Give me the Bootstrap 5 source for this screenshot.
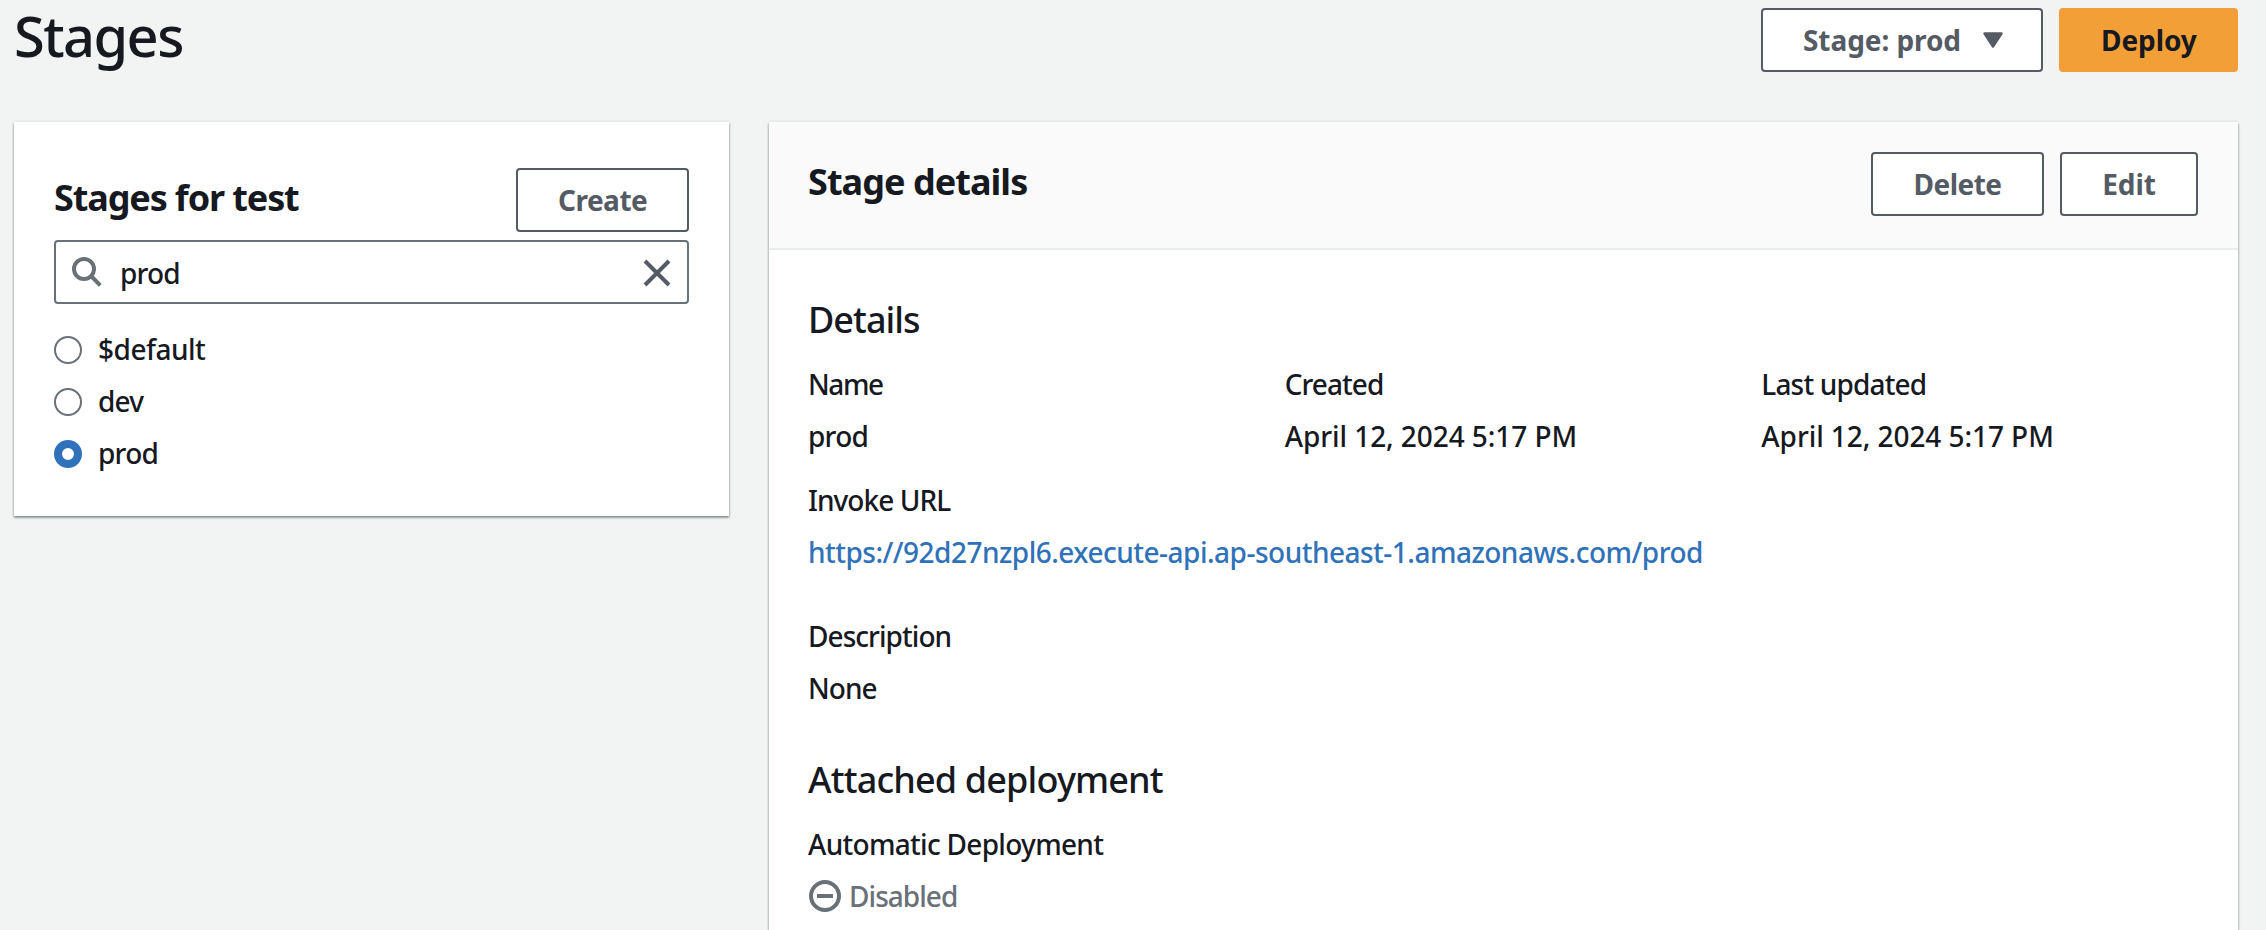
<!DOCTYPE html>
<html lang="en">
<head>
<meta charset="utf-8">
<meta name="viewport" content="width=device-width, initial-scale=1">
<title>Stages</title>
<link href="https://cdn.jsdelivr.net/npm/bootstrap@5.3.0/dist/css/bootstrap.min.css" rel="stylesheet">
<style>
  body {
    background: #f2f3f3;
    color: #16191f;
    font: 500 28px/44px "Noto Sans", "Open Sans", sans-serif;
    letter-spacing: -.5px;
    overflow: hidden;
  }
  .page { height: 930px; padding: 0 28px 0 14px; }
  .page-head { height: 122px; }
  .page-title { font-size: 56px; line-height: 70px; font-weight: 500; letter-spacing: -1.6px; }
  .head-actions { padding-top: 8px; }
  .gap-btn { gap: 16px; }

  .btn-console {
    height: 64px;
    padding: 0 40px;
    border: 2px solid #545b64;
    border-radius: 4px;
    background: #fff;
    color: #545b64;
    font-size: 28px;
    font-weight: 700;
    line-height: 58px;
    white-space: nowrap;
  }
  .btn-deploy { background: #f29f38; border-color: #f29f38; color: #16191f; }
  .caret { width: 20px; height: 16px; }
  .w-stage { width: 282px; padding-right: 38px; }
  .w-deploy { width: 179px; }
  .w-create, .w-delete { width: 173px; }
  .w-edit { width: 138px; }

  .panel {
    border: 0;
    border-radius: 0;
    background: #fff;
    color: inherit;
    box-shadow: 0 2px 2px 0 rgba(0, 28, 36, .3), 1px 1px 2px 0 rgba(0, 28, 36, .15), -1px 1px 2px 0 rgba(0, 28, 36, .15), 0 -2px 0 0 #eaeded;
  }
  .panels { gap: 40px; }
  .panel-list { width: 715px; height: 394px; padding: 46px 40px 0; }
  .panel-details { flex: 1; height: 840px; }
  .panel-head {
    height: 128px;
    padding: 30px 40px 0 39px;
    border-bottom: 2px solid #eaeded;
    border-radius: 0 !important;
    background: #fafafa;
  }
  .panel-main { padding: 48px 40px 0 39px; }
  .title-bold, .title-light { font-size: 36px; line-height: 44px; margin: 0; }
  .title-bold { font-weight: 700; }
  .title-light { font-weight: 500; margin-bottom: 20px; }

  .search {
    height: 64px;
    margin-top: 8px;
    padding: 2px 14px 0 16px;
    border: 2px solid #687078;
    border-radius: 4px;
  }
  .search input {
    min-width: 0;
    margin-left: 16px;
    padding: 0;
    border: 0;
    outline: 0;
    background: none;
    color: inherit;
    font: inherit;
    letter-spacing: -.8px;
  }
  .stage-list { padding-top: 23px; }
  .stage-option { height: 44px; margin-bottom: 8px; gap: 16px; }
  .stage-option .form-check-input {
    width: 28px;
    height: 28px;
    margin: 2px 0 0;
    border: 2px solid #687078;
    background-image: none;
  }
  .stage-option .form-check-input:checked { border: 8.5px solid #3072b9; background-color: #fff; }

  .fields { display: grid; grid-template-columns: repeat(3, 1fr); column-gap: 40px; }
  .field dt, .field dd { margin: 0; font-weight: 500; }
  .field dt { margin-bottom: 8px; }
  .mt-url { margin-top: 20px; }
  .mt-desc { margin-top: 40px; }
  .mt-attached { margin-top: 48px; }
  .link-url { color: #3072b9; text-decoration: none; }
  .state-off { color: #687078; gap: 8px; }
  .state-off svg { margin-left: 1px; }

  .ls-n13 { letter-spacing: -1.4px; }
  .ls-n11 { letter-spacing: -1.12px; }
  .ls-n9 { letter-spacing: -.95px; }
  .ls-n8 { letter-spacing: -.84px; }
  .ls-n7 { letter-spacing: -.7px; }
  .ls-n6 { letter-spacing: -.75px; }
  .ls-n5 { letter-spacing: -.51px; }
  .ls-0 { letter-spacing: -.07px; }
</style>
</head>
<body>
<div class="page">
  <header class="page-head d-flex justify-content-between align-items-start">
    <h1 class="page-title m-0">Stages</h1>
    <div class="head-actions d-flex gap-btn">
      <button class="btn btn-console w-stage d-flex align-items-center justify-content-between ls-0" type="button"><span>Stage: prod</span>
        <svg class="caret" viewBox="0 0 20 16"><path d="M1.5 1.5h17L10 14.6z" fill="#545b64" stroke="#545b64" stroke-width="2.4" stroke-linejoin="round"/></svg>
      </button>
      <button class="btn btn-console btn-deploy w-deploy ls-0" type="button">Deploy</button>
    </div>
  </header>

  <main class="panels d-flex align-items-start">
    <section class="card panel panel-list">
      <div class="d-flex justify-content-between">
        <h2 class="title-bold ls-n11 pt-2">Stages for test</h2>
        <button class="btn btn-console w-create ls-n5" type="button">Create</button>
      </div>
      <div class="search d-flex align-items-center">
        <svg width="32" height="32" viewBox="0 0 32 32" fill="none" stroke="#687078" stroke-width="4"><circle cx="12" cy="12" r="10"/><path d="M19 19l9.3 9.3"/></svg>
        <input class="flex-grow-1" type="text" value="prod" aria-label="Find stages">
        <svg width="32" height="32" viewBox="0 0 32 32" stroke="#545b64" stroke-width="4"><path d="M4 4l24 24M28 4L4 28"/></svg>
      </div>
      <div class="stage-list">
        <label class="stage-option d-flex align-items-center"><input class="form-check-input" type="radio" name="stage"><span>$default</span></label>
        <label class="stage-option d-flex align-items-center"><input class="form-check-input" type="radio" name="stage"><span class="ls-n6">dev</span></label>
        <label class="stage-option d-flex align-items-center"><input class="form-check-input" type="radio" name="stage" checked><span class="ls-n6">prod</span></label>
      </div>
    </section>

    <section class="card panel panel-details">
      <div class="card-header panel-head d-flex justify-content-between align-items-start">
        <h2 class="title-bold ls-n9 mt-2">Stage details</h2>
        <div class="d-flex gap-btn">
          <button class="btn btn-console w-delete ls-n5" type="button">Delete</button>
          <button class="btn btn-console w-edit ls-0" type="button">Edit</button>
        </div>
      </div>
      <div class="panel-main">
        <h3 class="title-light ls-n9">Details</h3>
        <dl class="fields m-0">
          <div class="field"><dt class="ls-n13">Name</dt><dd class="ls-n6">prod</dd></div>
          <div class="field"><dt class="ls-n9">Created</dt><dd class="ls-0">April 12, 2024 5:17 PM</dd></div>
          <div class="field"><dt class="ls-n8">Last updated</dt><dd class="ls-0">April 12, 2024 5:17 PM</dd></div>
        </dl>
        <dl class="field mt-url mb-0"><dt class="ls-n9">Invoke URL</dt><dd class="ls-n5"><a class="link-url" href="#">https://92d27nzpl6.execute-api.ap-southeast-1.amazonaws.com/prod</a></dd></dl>
        <dl class="field mt-desc mb-0"><dt class="ls-n9">Description</dt><dd class="ls-n9">None</dd></dl>
        <h3 class="title-light mt-attached ls-n8">Attached deployment</h3>
        <dl class="field mb-0"><dt class="ls-n7">Automatic Deployment</dt>
          <dd class="state-off d-flex align-items-center"><svg width="32" height="32" viewBox="0 0 32 32" fill="none" stroke="#687078" stroke-width="4"><circle cx="16" cy="16" r="14"/><path d="M8 16h16"/></svg><span class="ls-n9">Disabled</span></dd>
        </dl>
      </div>
    </section>
  </main>
</div>
<script src="https://cdn.jsdelivr.net/npm/bootstrap@5.3.0/dist/js/bootstrap.bundle.min.js"></script>
</body>
</html>
